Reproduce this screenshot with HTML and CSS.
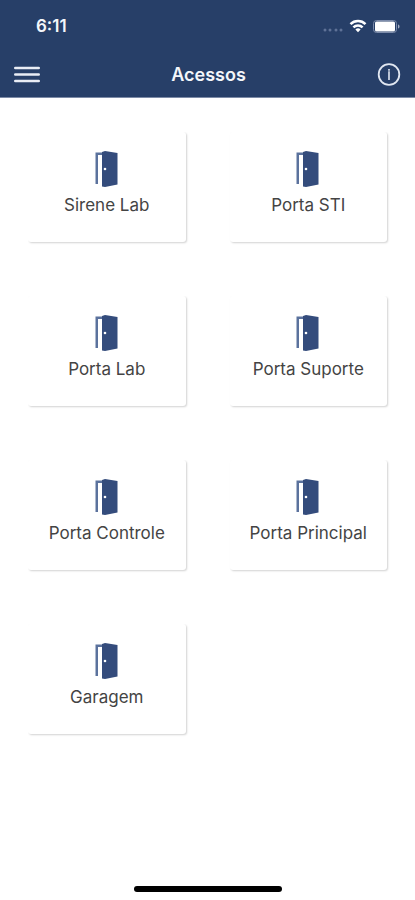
FILE: index.html
```html
<!DOCTYPE html>
<html lang="pt-BR">
<head>
  <meta charset="UTF-8">
  <meta name="viewport" content="width=device-width, initial-scale=1.0">
  <title>Acessos</title>
  <link rel="stylesheet" href="styles.css">
</head>
<body>
  <svg class="sprite" width="0" height="0" aria-hidden="true">
    <symbol id="door" viewBox="0 0 24 36">
      <path d="M0.500 1.500h8v2.500H3v29H.5z" fill="#5b729d"/>
      <path d="M7 1l3-1L22.500 2v31.500L10 36l-3-.5z" fill="#344c7c"/>
      <circle cx="10" cy="18" r="1.300" fill="#fff"/>
    </symbol>
  </svg>

  <header class="header">
    <div class="status-bar">
      <span class="time">6:11</span>
      <div class="status-icons">
        <svg class="dots" width="20" height="4" viewBox="0 0 20 4" fill="#5f7297">
          <circle cx="2" cy="2" r="1.500"/>
          <circle cx="7" cy="2" r="1.500"/>
          <circle cx="13" cy="2" r="1.500"/>
          <circle cx="18" cy="2" r="1.500"/>
        </svg>
        <svg width="18" height="14" viewBox="0 0 18 14" fill="none" stroke="#fff" stroke-width="2.500">
          <path d="M1.500 5.200a10.600 10.600 0 0 1 15 0"/>
          <path d="M4.400 8.300a6.500 6.500 0 0 1 9.200 0"/>
          <path d="M9 13.200L6.400 10.600a3.700 3.700 0 0 1 5.200 0z" fill="#fff" stroke="none"/>
        </svg>
        <svg width="27" height="13" viewBox="0 0 27 13">
          <rect x="0.500" y="0.500" width="23" height="12" rx="3" fill="none" stroke="#7d8cab"/>
          <rect x="2" y="1.500" width="20" height="10" rx="1.500" fill="#fff"/>
          <path d="M25 4.500c2 .6 2 3.400 0 4z" fill="#a3aec4"/>
        </svg>
      </div>
    </div>
    <div class="nav-bar">
      <button class="icon-btn" type="button" aria-label="Menu">
        <svg width="26" height="18" viewBox="0 0 26 18" stroke="#e9edf5" stroke-width="2.600" stroke-linecap="round">
          <path d="M1.300 2h23.400M1.300 8.500h23.400M1.300 15h23.400"/>
        </svg>
      </button>
      <h1 class="title">Acessos</h1>
      <button class="icon-btn" type="button" aria-label="Info">
        <svg width="24" height="24" viewBox="0 0 24 24" fill="none" stroke="#e1e7f1">
          <circle cx="12" cy="11.500" r="10.300" stroke-width="1.800"/>
          <path d="M12 6v1.800M12 8.300v8.700" stroke-width="1.600"/>
        </svg>
      </button>
    </div>
  </header>

  <main class="grid">
    <button class="card" type="button"><svg class="door"><use href="#door"/></svg>Sirene Lab</button>
    <button class="card" type="button"><svg class="door"><use href="#door"/></svg>Porta STI</button>
    <button class="card" type="button"><svg class="door"><use href="#door"/></svg>Porta Lab</button>
    <button class="card" type="button"><svg class="door"><use href="#door"/></svg>Porta Suporte</button>
    <button class="card" type="button"><svg class="door"><use href="#door"/></svg>Porta Controle</button>
    <button class="card" type="button"><svg class="door"><use href="#door"/></svg>Porta Principal</button>
    <button class="card" type="button"><svg class="door"><use href="#door"/></svg>Garagem</button>
  </main>

  <footer class="footer">
    <div class="home-indicator"></div>
  </footer>
</body>
</html>
```
FILE: styles.css
```css
* {
  box-sizing: border-box;
}

body {
  margin: 0;
  min-height: 100vh;
  display: flex;
  flex-direction: column;
  background: #fff;
  font-family: Inter, sans-serif;
}

.sprite {
  position: absolute;
}

.header {
  background: #273f68;
  border-bottom: 1px solid #7c8aa6;
  color: #f4f6fa;
}

.status-bar {
  display: flex;
  justify-content: space-between;
  align-items: center;
  height: 52px;
  padding: 0 15px 0 36px;
}

.time {
  font-size: 17px;
  font-weight: 600;
}

.status-icons {
  display: flex;
  align-items: center;
  gap: 6px;
}

.dots {
  margin-top: 8px;
}

.nav-bar {
  display: flex;
  justify-content: space-between;
  align-items: center;
  height: 45px;
  padding: 0 14px;
}

.title {
  margin: 0;
  font-size: 18px;
  font-weight: 600;
}

.icon-btn {
  display: flex;
  padding: 0;
  border: none;
  background: none;
  cursor: pointer;
}

.grid {
  display: grid;
  grid-template-columns: 1fr 1fr;
  gap: 54px 44px;
  padding: 34px 28px;
}

.card {
  display: flex;
  flex-direction: column;
  align-items: center;
  gap: 6px;
  height: 110px;
  padding: 19px 0 0;
  border: none;
  border-radius: 3px;
  background: #fff;
  box-shadow: 1px 1px 2px rgba(0, 0, 0, 0.18);
  clip-path: inset(0 -4px -4px 0);
  color: #444;
  font-family: inherit;
  font-size: 17px;
  font-weight: 400;
  line-height: 24px;
  cursor: pointer;
}

.door {
  width: 24px;
  height: 36px;
}

.footer {
  display: flex;
  justify-content: center;
  margin-top: auto;
  padding-bottom: 8px;
}

.home-indicator {
  width: 148px;
  height: 6px;
  border-radius: 3px;
  background: #000;
}
```
